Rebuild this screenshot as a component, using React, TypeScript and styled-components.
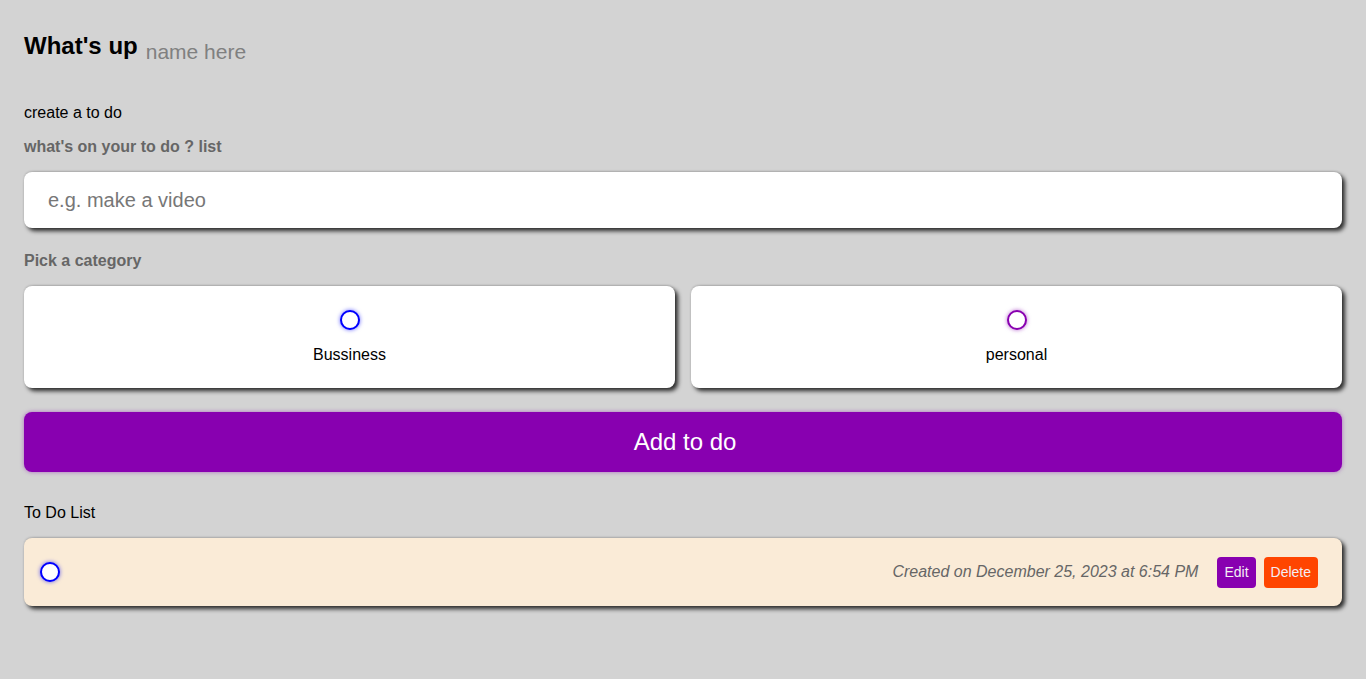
import React from "react";
import styled, { createGlobalStyle } from "styled-components";

const GlobalStyle = createGlobalStyle`
  html, body {
    margin: 0;
    padding: 0;
    background: #d3d3d3;
    font-family: "Liberation Sans", Arial, sans-serif;
    color: #000;
  }
  * { box-sizing: border-box; }
`;

const Page = styled.main`
  padding: 32px 24px;
  display: flex;
  flex-direction: column;
`;

const Title = styled.h2`
  margin: 0;
  font-size: 24px;
  line-height: 28px;
  font-weight: 700;
  display: flex;
  align-items: flex-start;
  gap: 8px;
`;

const NameInput = styled.span`
  margin-top: 8px;
  font-size: 21px;
  line-height: 24px;
  font-weight: 400;
  color: #808080;
`;

const SectionTitle = styled.h4<{ $top: number }>`
  margin: ${(p) => p.$top}px 0 0;
  font-size: 16px;
  line-height: 18px;
  font-weight: 400;
`;

const Label = styled.h4<{ $top: number }>`
  margin: ${(p) => p.$top}px 0 0;
  font-size: 16px;
  line-height: 18px;
  font-weight: 700;
  color: #666;
`;

const cardShadow = "3px 3px 4px rgba(0,0,0,0.8), 0 -1px 2px rgba(0,0,0,0.15)";

const TextInput = styled.input`
  margin-top: 16px;
  height: 56px;
  width: 100%;
  border: none;
  outline: none;
  border-radius: 8px;
  background: #fff;
  padding: 0 24px;
  font-family: "Liberation Sans", Arial, sans-serif;
  font-size: 20px;
  box-shadow: ${cardShadow};
  &::placeholder { color: #777; }
`;

const Options = styled.div`
  margin-top: 16px;
  display: grid;
  grid-template-columns: 1fr 1fr;
  gap: 16px;
`;

const Option = styled.label`
  height: 102px;
  background: #fff;
  border-radius: 8px;
  box-shadow: ${cardShadow};
  display: flex;
  flex-direction: column;
  align-items: center;
  padding-top: 24px;
  gap: 16px;
  font-size: 16px;
  line-height: 18px;
  cursor: pointer;
`;

const Bubble = styled.span<{ $color: string }>`
  display: block;
  width: 20px;
  height: 20px;
  border-radius: 50%;
  border: 2px solid ${(p) => p.$color};
  box-shadow: 0 0 4px ${(p) => p.$color}99;
  background: #fff;
  flex: none;
`;

const AddButton = styled.button`
  margin-top: 24px;
  height: 60px;
  width: 100%;
  border: none;
  border-radius: 8px;
  background: #8800b0;
  color: #fff;
  font-family: "Liberation Sans", Arial, sans-serif;
  font-size: 24px;
  padding: 0 0 0 4px;
  box-shadow: 0 0 4px rgba(136,0,176,0.5);
  cursor: pointer;
`;

const TodoItem = styled.div`
  margin-top: 16px;
  height: 68px;
  background: #faebd7;
  border-radius: 8px;
  box-shadow: ${cardShadow};
  display: flex;
  align-items: center;
  padding: 0 24px 0 16px;
`;

const TodoContent = styled.div`
  flex: 1;
`;

const Created = styled.span`
  font-style: italic;
  font-size: 16px;
  color: #666;
  margin-right: 19px;
`;

const Actions = styled.div`
  display: flex;
  gap: 8px;
`;

const SmallButton = styled.button<{ $bg: string }>`
  height: 31px;
  border: none;
  border-radius: 4px;
  padding: 0 7px;
  background: ${(p) => p.$bg};
  color: #f4eef4;
  font-family: "Liberation Sans", Arial, sans-serif;
  font-size: 14px;
  cursor: pointer;
`;

export default function App() {
  return (
    <>
      <GlobalStyle />
      <Page>
        <Title>
          What's up <NameInput>name here</NameInput>
        </Title>
        <SectionTitle $top={40}>create a to do</SectionTitle>
        <Label $top={16}>what's on your to do ? list</Label>
        <TextInput placeholder="e.g. make a video" />
        <Label $top={24}>Pick a category</Label>
        <Options>
          <Option>
            <Bubble $color="#0000ff" />
            <span>Bussiness</span>
          </Option>
          <Option>
            <Bubble $color="#8800b0" />
            <span>personal</span>
          </Option>
        </Options>
        <AddButton>Add to do</AddButton>
        <SectionTitle $top={32}>To Do List</SectionTitle>
        <TodoItem>
          <Bubble $color="#0000ff" />
          <TodoContent />
          <Created>Created on December 25, 2023 at 6:54 PM</Created>
          <Actions>
            <SmallButton $bg="#8800b0">Edit</SmallButton>
            <SmallButton $bg="#ff4500">Delete</SmallButton>
          </Actions>
        </TodoItem>
      </Page>
    </>
  );
}
